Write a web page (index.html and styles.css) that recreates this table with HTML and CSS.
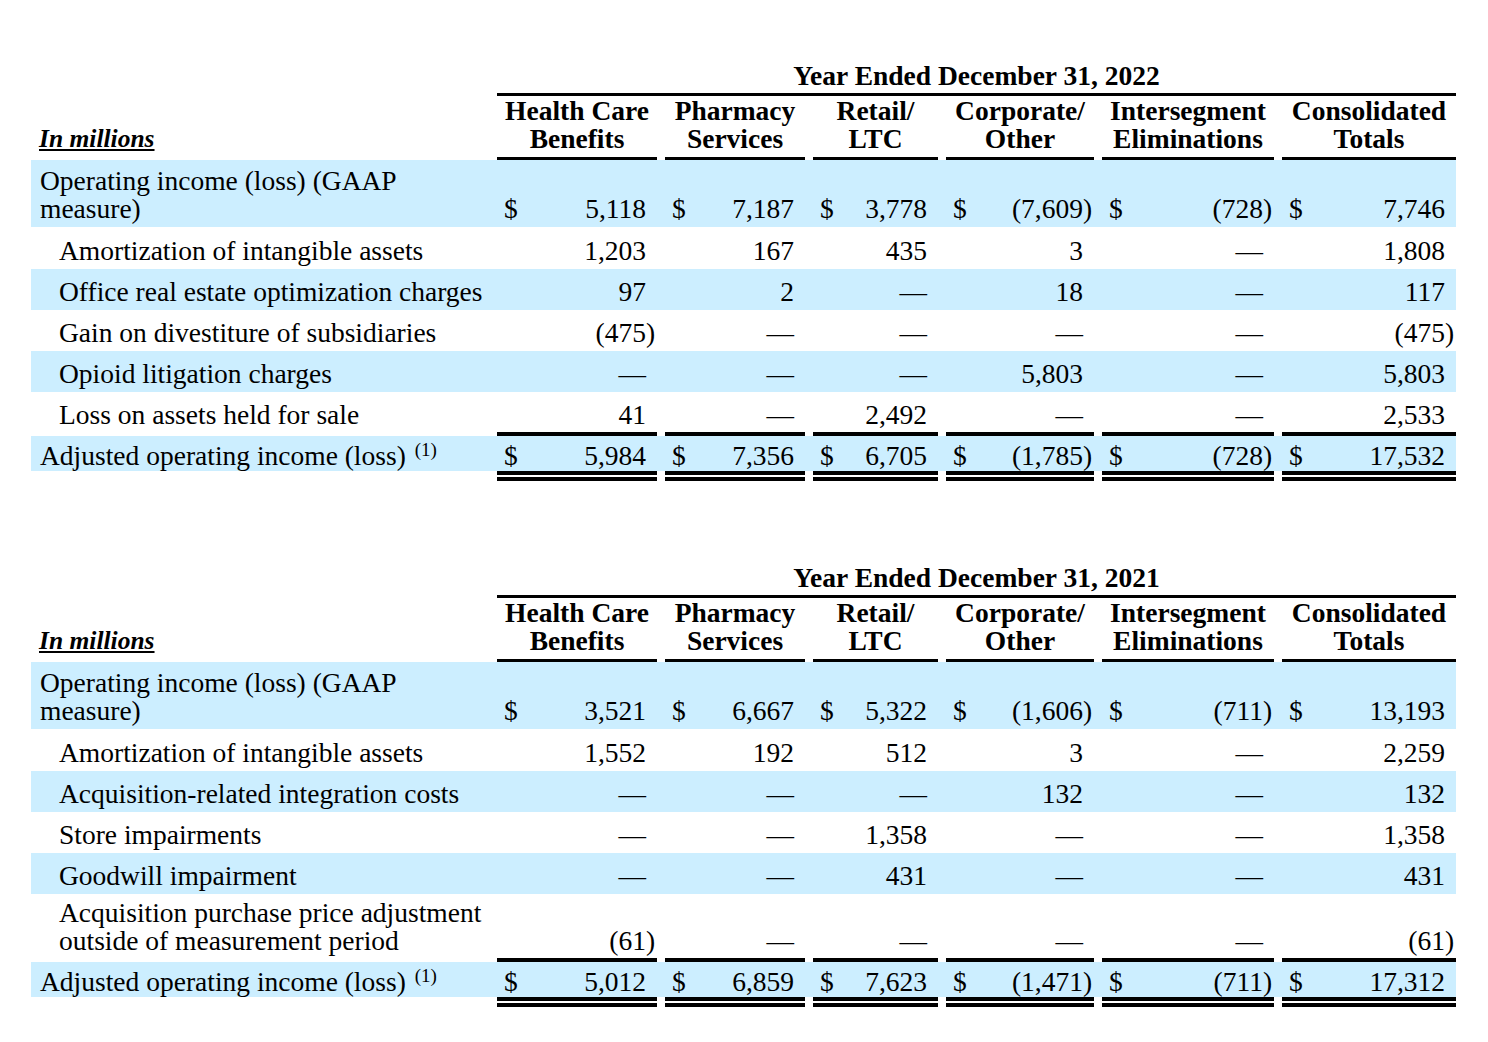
FILE: index.html
```html
<!DOCTYPE html>
<html lang="en">
<head>
<meta charset="utf-8">
<title>Adjusted operating income reconciliation</title>
<link rel="stylesheet" href="styles.css">
</head>
<body>
<main class="page">

  <section class="fin-table">
    <div class="row row-title">
      <div class="label"></div>
      <div class="title">Year Ended December 31, 2022</div>
    </div>
    <div class="row row-head">
      <div class="label"><span class="units">In millions</span></div>
      <div class="hcell">Health Care<br>Benefits</div>
      <div class="hcell">Pharmacy<br>Services</div>
      <div class="hcell">Retail/<br>LTC</div>
      <div class="hcell">Corporate/<br>Other</div>
      <div class="hcell">Intersegment<br>Eliminations</div>
      <div class="hcell">Consolidated<br>Totals</div>
    </div>
    <div class="row shaded two-line">
      <div class="label">Operating income (loss) (GAAP<br>measure)</div>
      <div class="cell"><span class="cur">$</span><span class="num">5,118</span><span class="paren"></span></div>
      <div class="cell"><span class="cur">$</span><span class="num">7,187</span><span class="paren"></span></div>
      <div class="cell"><span class="cur">$</span><span class="num">3,778</span><span class="paren"></span></div>
      <div class="cell"><span class="cur">$</span><span class="num">(7,609</span><span class="paren">)</span></div>
      <div class="cell"><span class="cur">$</span><span class="num">(728</span><span class="paren">)</span></div>
      <div class="cell"><span class="cur">$</span><span class="num">7,746</span><span class="paren"></span></div>
    </div>
    <div class="row first-item">
      <div class="label item">Amortization of intangible assets</div>
      <div class="cell"><span class="num">1,203</span><span class="paren"></span></div>
      <div class="cell"><span class="num">167</span><span class="paren"></span></div>
      <div class="cell"><span class="num">435</span><span class="paren"></span></div>
      <div class="cell"><span class="num">3</span><span class="paren"></span></div>
      <div class="cell"><span class="num">—</span><span class="paren"></span></div>
      <div class="cell"><span class="num">1,808</span><span class="paren"></span></div>
    </div>
    <div class="row shaded">
      <div class="label item">Office real estate optimization charges</div>
      <div class="cell"><span class="num">97</span><span class="paren"></span></div>
      <div class="cell"><span class="num">2</span><span class="paren"></span></div>
      <div class="cell"><span class="num">—</span><span class="paren"></span></div>
      <div class="cell"><span class="num">18</span><span class="paren"></span></div>
      <div class="cell"><span class="num">—</span><span class="paren"></span></div>
      <div class="cell"><span class="num">117</span><span class="paren"></span></div>
    </div>
    <div class="row">
      <div class="label item">Gain on divestiture of subsidiaries</div>
      <div class="cell"><span class="num">(475</span><span class="paren">)</span></div>
      <div class="cell"><span class="num">—</span><span class="paren"></span></div>
      <div class="cell"><span class="num">—</span><span class="paren"></span></div>
      <div class="cell"><span class="num">—</span><span class="paren"></span></div>
      <div class="cell"><span class="num">—</span><span class="paren"></span></div>
      <div class="cell"><span class="num">(475</span><span class="paren">)</span></div>
    </div>
    <div class="row shaded">
      <div class="label item">Opioid litigation charges</div>
      <div class="cell"><span class="num">—</span><span class="paren"></span></div>
      <div class="cell"><span class="num">—</span><span class="paren"></span></div>
      <div class="cell"><span class="num">—</span><span class="paren"></span></div>
      <div class="cell"><span class="num">5,803</span><span class="paren"></span></div>
      <div class="cell"><span class="num">—</span><span class="paren"></span></div>
      <div class="cell"><span class="num">5,803</span><span class="paren"></span></div>
    </div>
    <div class="row pre-total">
      <div class="label item">Loss on assets held for sale</div>
      <div class="cell"><span class="num">41</span><span class="paren"></span></div>
      <div class="cell"><span class="num">—</span><span class="paren"></span></div>
      <div class="cell"><span class="num">2,492</span><span class="paren"></span></div>
      <div class="cell"><span class="num">—</span><span class="paren"></span></div>
      <div class="cell"><span class="num">—</span><span class="paren"></span></div>
      <div class="cell"><span class="num">2,533</span><span class="paren"></span></div>
    </div>
    <div class="row total">
      <div class="label">Adjusted operating income (loss) <sup class="note">(1)</sup></div>
      <div class="cell"><span class="cur">$</span><span class="num">5,984</span><span class="paren"></span></div>
      <div class="cell"><span class="cur">$</span><span class="num">7,356</span><span class="paren"></span></div>
      <div class="cell"><span class="cur">$</span><span class="num">6,705</span><span class="paren"></span></div>
      <div class="cell"><span class="cur">$</span><span class="num">(1,785</span><span class="paren">)</span></div>
      <div class="cell"><span class="cur">$</span><span class="num">(728</span><span class="paren">)</span></div>
      <div class="cell"><span class="cur">$</span><span class="num">17,532</span><span class="paren"></span></div>
    </div>
  </section>

  <section class="fin-table second">
    <div class="row row-title">
      <div class="label"></div>
      <div class="title">Year Ended December 31, 2021</div>
    </div>
    <div class="row row-head">
      <div class="label"><span class="units">In millions</span></div>
      <div class="hcell">Health Care<br>Benefits</div>
      <div class="hcell">Pharmacy<br>Services</div>
      <div class="hcell">Retail/<br>LTC</div>
      <div class="hcell">Corporate/<br>Other</div>
      <div class="hcell">Intersegment<br>Eliminations</div>
      <div class="hcell">Consolidated<br>Totals</div>
    </div>
    <div class="row shaded two-line">
      <div class="label">Operating income (loss) (GAAP<br>measure)</div>
      <div class="cell"><span class="cur">$</span><span class="num">3,521</span><span class="paren"></span></div>
      <div class="cell"><span class="cur">$</span><span class="num">6,667</span><span class="paren"></span></div>
      <div class="cell"><span class="cur">$</span><span class="num">5,322</span><span class="paren"></span></div>
      <div class="cell"><span class="cur">$</span><span class="num">(1,606</span><span class="paren">)</span></div>
      <div class="cell"><span class="cur">$</span><span class="num">(711</span><span class="paren">)</span></div>
      <div class="cell"><span class="cur">$</span><span class="num">13,193</span><span class="paren"></span></div>
    </div>
    <div class="row first-item">
      <div class="label item">Amortization of intangible assets</div>
      <div class="cell"><span class="num">1,552</span><span class="paren"></span></div>
      <div class="cell"><span class="num">192</span><span class="paren"></span></div>
      <div class="cell"><span class="num">512</span><span class="paren"></span></div>
      <div class="cell"><span class="num">3</span><span class="paren"></span></div>
      <div class="cell"><span class="num">—</span><span class="paren"></span></div>
      <div class="cell"><span class="num">2,259</span><span class="paren"></span></div>
    </div>
    <div class="row shaded">
      <div class="label item">Acquisition-related integration costs</div>
      <div class="cell"><span class="num">—</span><span class="paren"></span></div>
      <div class="cell"><span class="num">—</span><span class="paren"></span></div>
      <div class="cell"><span class="num">—</span><span class="paren"></span></div>
      <div class="cell"><span class="num">132</span><span class="paren"></span></div>
      <div class="cell"><span class="num">—</span><span class="paren"></span></div>
      <div class="cell"><span class="num">132</span><span class="paren"></span></div>
    </div>
    <div class="row">
      <div class="label item">Store impairments</div>
      <div class="cell"><span class="num">—</span><span class="paren"></span></div>
      <div class="cell"><span class="num">—</span><span class="paren"></span></div>
      <div class="cell"><span class="num">1,358</span><span class="paren"></span></div>
      <div class="cell"><span class="num">—</span><span class="paren"></span></div>
      <div class="cell"><span class="num">—</span><span class="paren"></span></div>
      <div class="cell"><span class="num">1,358</span><span class="paren"></span></div>
    </div>
    <div class="row shaded">
      <div class="label item">Goodwill impairment</div>
      <div class="cell"><span class="num">—</span><span class="paren"></span></div>
      <div class="cell"><span class="num">—</span><span class="paren"></span></div>
      <div class="cell"><span class="num">431</span><span class="paren"></span></div>
      <div class="cell"><span class="num">—</span><span class="paren"></span></div>
      <div class="cell"><span class="num">—</span><span class="paren"></span></div>
      <div class="cell"><span class="num">431</span><span class="paren"></span></div>
    </div>
    <div class="row pre-total tight-two">
      <div class="label item">Acquisition purchase price adjustment<br>outside of measurement period</div>
      <div class="cell"><span class="num">(61</span><span class="paren">)</span></div>
      <div class="cell"><span class="num">—</span><span class="paren"></span></div>
      <div class="cell"><span class="num">—</span><span class="paren"></span></div>
      <div class="cell"><span class="num">—</span><span class="paren"></span></div>
      <div class="cell"><span class="num">—</span><span class="paren"></span></div>
      <div class="cell"><span class="num">(61</span><span class="paren">)</span></div>
    </div>
    <div class="row total">
      <div class="label">Adjusted operating income (loss) <sup class="note">(1)</sup></div>
      <div class="cell"><span class="cur">$</span><span class="num">5,012</span><span class="paren"></span></div>
      <div class="cell"><span class="cur">$</span><span class="num">6,859</span><span class="paren"></span></div>
      <div class="cell"><span class="cur">$</span><span class="num">7,623</span><span class="paren"></span></div>
      <div class="cell"><span class="cur">$</span><span class="num">(1,471</span><span class="paren">)</span></div>
      <div class="cell"><span class="cur">$</span><span class="num">(711</span><span class="paren">)</span></div>
      <div class="cell"><span class="cur">$</span><span class="num">17,312</span><span class="paren"></span></div>
    </div>
  </section>

</main>
</body>
</html>
```

FILE: styles.css
```css
html, body {
  margin: 0;
  padding: 0;
  background: #ffffff;
}

.page {
  padding: 62px 0 0 31px;
  font-family: "Liberation Serif", "Times New Roman", serif;
  font-size: 27.5px;
  line-height: 28px;
  color: #000;
}

.fin-table {
  width: 1425px;
}

.fin-table.second {
  margin-top: 83px;
}

.row {
  display: grid;
  grid-template-columns: 458px 160px 140px 125px 148px 172px 174px;
  column-gap: 8px;
  align-items: end;
}

.row > * {
  padding-top: 9px;
  padding-bottom: 4px;
  white-space: nowrap;
}

.row.shaded {
  background: #cceeff;
}

.row.two-line > * {
  padding-top: 7px;
}

.row.first-item > * {
  padding-top: 10px;
}

/* title row */
.row-title > * {
  padding-top: 0;
  padding-bottom: 3px;
}

.title {
  grid-column: 2 / -1;
  text-align: center;
  font-weight: bold;
  border-bottom: 3px solid #000;
}

/* header row */
.row-head > * {
  padding-top: 1px;
  padding-bottom: 4px;
}

.row-head .label {
  border-bottom: 3px solid transparent;
}

.hcell {
  text-align: center;
  font-weight: bold;
  border-bottom: 3px solid #000;
}

.units {
  font-weight: bold;
  font-style: italic;
  text-decoration: underline;
  text-decoration-thickness: 1.5px;
  text-underline-offset: 2px;
  margin-left: -1px;
  font-size: 25.5px;
}

/* labels */
.label {
  padding-left: 9px;
}

.label.item {
  padding-left: 28px;
}

/* numeric cells */
.cell {
  display: flex;
  padding-left: 7px;
  padding-right: 2px;
}

.cur {
  flex: 0 0 auto;
}

.num {
  margin-left: auto;
  text-align: right;
}

.paren {
  flex: 0 0 9px;
  width: 9px;
}

/* rule above totals */
.row.pre-total > * {
  padding-bottom: 3px;
}

.pre-total .cell {
  border-bottom: 4px solid #000;
}

.pre-total .label {
  border-bottom: 4px solid transparent;
}

.row.tight-two > * {
  padding-top: 5px;
}

/* totals row: shaded band, then a double rule under each amount */
.row.total {
  background: linear-gradient(#cceeff, #cceeff) top left / 100% calc(100% - 10px) no-repeat;
}

.row.total > * {
  padding-top: 6px;
  padding-bottom: 7px;
  border-bottom: 4px solid transparent;
}

.row.total .cell {
  border-bottom-color: #000;
  background: linear-gradient(#000, #000) left bottom 2px / 100% 4px no-repeat;
}

.note {
  font-size: 19px;
  line-height: 0;
  vertical-align: 9px;
  margin-left: 2px;
}
```
